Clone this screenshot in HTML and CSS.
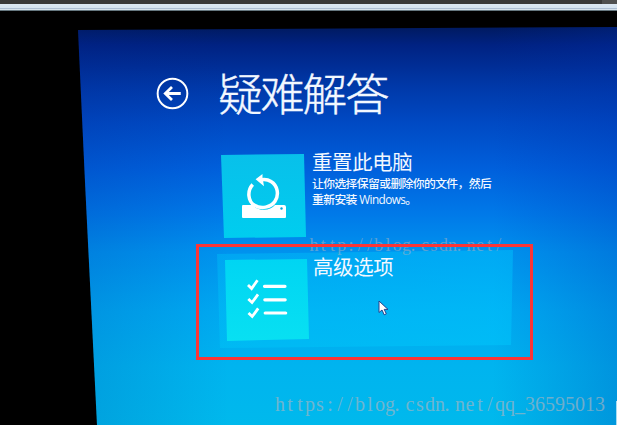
FILE: index.html
```
<!DOCTYPE html>
<html lang="zh-CN">
<head>
<meta charset="utf-8">
<title>疑难解答</title>
<link rel="stylesheet" href="styles.css">
</head>
<body>
<div class="frame-bar"></div>
<main class="monitor">
  <section class="screen">
    <header class="heading">
      <svg class="back" viewBox="0 0 32 32"><circle cx="16" cy="16" r="14.4" fill="none" stroke="#fff" stroke-width="1.9"/><path d="M24 16H9M15.5 9.7L9 16L15.5 22.3" fill="none" stroke="#fff" stroke-width="2.7"/></svg>
      <h1>疑难解答</h1>
    </header>
    <div class="option">
      <div class="tile tile-reset">
        <svg class="icon-reset" viewBox="0 0 46 46"><path d="M1.7 31H11.5Q16 35.8 23 35.8Q30 35.8 34 31H43Q45 31 45 33V43Q45 44 44 44H2Q1 44 1 43V33Q1 31 1.7 31Z" fill="#fff"/><circle cx="40.5" cy="34.5" r="1.2" fill="#00a8dc"/><path d="M11.7 10.5C5.8 17 7 27.5 13.5 31.3C20 35.3 30 33.5 34 27.3C38.4 20.5 36.5 11.3 30 7.5C27.3 5.8 24 5.3 20.5 5.8" fill="none" stroke="#fff" stroke-width="3.5"/><path d="M14.6 5.2L21.5 0V3.5L23 12.2Z" fill="#fff"/></svg>
      </div>
      <div class="copy">
        <h2>重置此电脑</h2>
        <p>让你选择保留或删除你的文件<span class="comma">，</span>然后<br>重新安装 Windows。</p>
      </div>
    </div>
    <div class="option selected">
      <div class="tile tile-advanced">
        <svg class="icon-list" viewBox="0 0 42 42"><g fill="none" stroke="#fff" stroke-width="2.8"><path d="M2 7L5.6 10.5L11.5 2.3M2.3 21L6 24.5L12 16.3M2.5 35L6.2 38.5L12.2 30.3"/><path d="M18.5 8.3H39M18.8 21.8H39.2M19.2 35H39.7" stroke-width="3.2" stroke-linecap="round"/></g></svg>
      </div>
      <div class="copy"><h2>高级选项</h2></div>
    </div>
  </section>
</main>
<svg class="watermark" viewBox="0 0 617 425">
  <text class="mark-small" y="251" x="314 323.2 332.5 341.7 351 360.2 369.4 378.7 387.9 397.2 406.4 413 424.9 434.1 443.4 452.6 459 471.1 480.3 489.6 498.8">http://blog.csdn.net/</text>
  <text class="mark-large" y="411" x="280 290 300 310 320 330 340 350 360 370 380 390 397 410 420 430 440 447 460 470 480 490 500 510 520 530 540 550 560 570 580 590 600">https://blog.csdn.net/qq_36595013</text>
</svg>
<div class="highlight"></div>
<svg class="cursor" viewBox="0 0 12 16"><path d="M1 1V12.5L4 10L6.2 14.8L8.3 13.8L6.2 9.4H10Z" fill="#fff" stroke="#27408a" stroke-width="1"/></svg>
<div class="corner"></div>
</body>
</html>
```
FILE: styles.css
```
* { box-sizing: border-box; }
body {
  margin: 0;
  width: 617px;
  height: 425px;
  overflow: hidden;
  position: relative;
  display: flex;
  flex-direction: column;
  background: #000;
  color: #f3f8ff;
  font-family: "Open Sans", "Noto Sans CJK SC", sans-serif;
}
h1, h2, p { margin: 0; }
.frame-bar {
  flex: none;
  height: 11px;
  background:
    linear-gradient(90deg, transparent 602px, #505050 602px) 0 0 / 100% 4px no-repeat,
    linear-gradient(#393939 4px, #dce8f3 4px, #d5e3f0 8px, #aebfd4 8px, #aebfd4 9px, #d6e2ec 9px, #d6e2ec 10px, #65777f 10px);
}
.monitor { flex: 1; display: flex; padding: 16px 0 0 78px; }
.screen {
  flex: 1;
  padding: 40px 0 0 78px;
  clip-path: polygon(0 3px, 100% 0, 100% 100%, 19px 100%, 7px 155px);
  background:
    linear-gradient(90deg, rgba(0,35,140,.16), transparent 28%, transparent 77%, rgba(0,45,170,.24)),
    linear-gradient(#001a60 0, #002282 18px, #0039a9 60px, #0049c3 95px, #0060dc 142px, #0078e8 185px, #0092ee 225px, #00a9f1 285px, #00b4ef 340px, #00b9ec 400px);
}
.heading { display: flex; height: 87px; }
.back { width: 33px; height: 33px; margin-top: 10px; }
h1 {
  margin-left: 29px;
  margin-top: -1px;
  font-family: "Noto Sans CJK SC", sans-serif;
  font-size: 44.6px;
  font-weight: 300;
  line-height: 52px;
  letter-spacing: -2.3px;
  -webkit-text-stroke: .4px #f3f8ff;
}
.option { display: flex; margin-left: 65px; height: 84px; }
.tile { flex: none; display: flex; align-items: center; justify-content: center; }
.tile-reset {
  width: 86px;
  height: 84px;
  background: linear-gradient(#08c0ea, #00cdef);
  clip-path: polygon(0 1px, 83px 0, 85px 83px, 3px 84px);
}
.icon-reset { width: 46px; height: 46px; margin-top: 2px; }
.copy { padding: 0 0 0 5px; }
h2 { font: 400 20.4px/21px "Noto Sans CJK SC", sans-serif; letter-spacing: -.3px; white-space: nowrap; }
.option:not(.selected) h2 { margin-top: -3px; }
p { margin-top: 3px; font-size: 11.8px; line-height: 16px; font-weight: 500; letter-spacing: -.6px; white-space: nowrap; }
.comma { font-family: "Noto Sans CJK TC", sans-serif; }
.selected {
  width: 296px;
  height: 98px;
  margin: 12px 0 0 61px;
  padding: 9px 0 0 8px;
  background: linear-gradient(90deg, rgba(0,205,250,.32), rgba(0,205,255,.4));
  clip-path: polygon(0 4px, 296px 0, 294px 95px, 3px 98px);
}
.tile-advanced {
  width: 84px;
  height: 82px;
  background: linear-gradient(#00d5f3, #08e0f2);
  clip-path: polygon(0 1px, 82px 0, 84px 80px, 2px 82px);
}
.icon-list { width: 42px; height: 42px; margin-top: -3px; }
.selected .copy { padding-left: 4px; margin-top: -3px; }
.watermark { position: absolute; inset: 0; width: 617px; height: 425px; }
.watermark text { font-family: "Liberation Serif", serif; text-anchor: middle; fill: #b0b5bd; }
.mark-small { font-size: 18px; opacity: .5; }
.mark-large { font-size: 20px; opacity: .62; }
.highlight { position: absolute; left: 196px; top: 244px; width: 337px; height: 116px; border: 3px solid #fb3536; }
.cursor { position: absolute; left: 378px; top: 300px; width: 12px; height: 16px; }
.corner { position: absolute; right: 0; bottom: 0; width: 1px; height: 24px; background: #a8dcf2; }
```
